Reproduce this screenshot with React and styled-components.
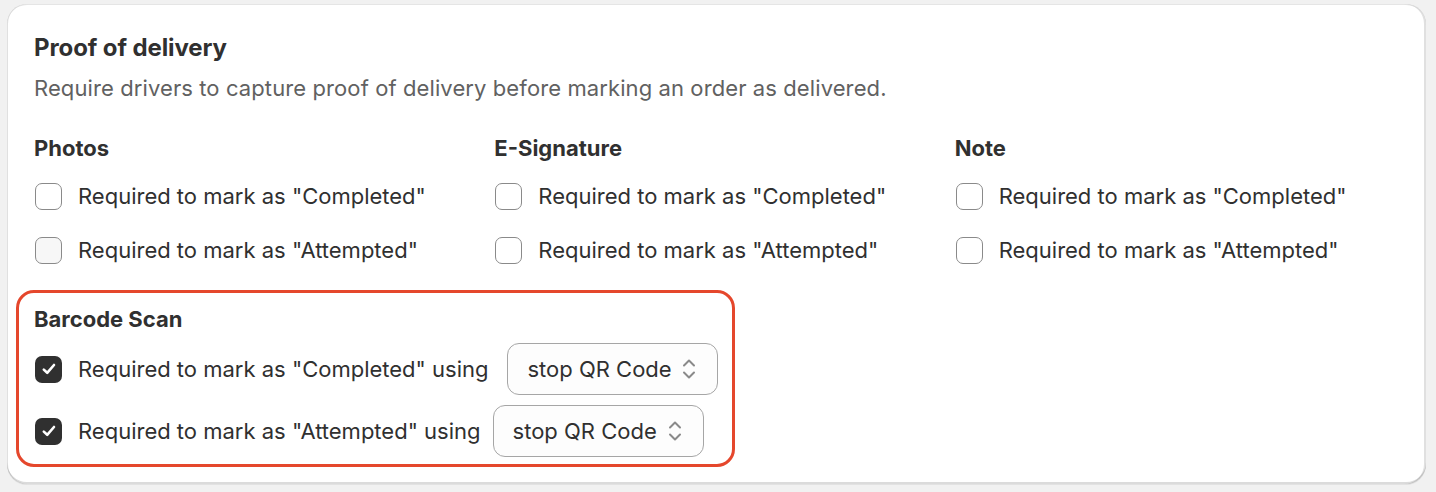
import React from "react";
import styled, { createGlobalStyle } from "styled-components";

const Global = createGlobalStyle`
  html, body { margin: 0; padding: 0; background: #f1f1f1; }
  body { font-family: Inter, "Noto Sans", sans-serif; color: #303030; }
  * { box-sizing: border-box; }
`;

const Page = styled.div`
  padding: 4px 10px 8px 7px;
`;

const Card = styled.section`
  background: #fff;
  border-radius: 20px;
  padding: 30px 27px 17px 27px;
  box-shadow: 0 1px 0 0 rgba(26, 26, 26, 0.07),
    inset 0 1px 0 0 rgba(204, 204, 204, 0.5),
    inset 0 -2px 0 0 rgba(0, 0, 0, 0.14),
    inset 1px 0 0 0 rgba(0, 0, 0, 0.12),
    inset -2px 0 0 0 rgba(0, 0, 0, 0.12);
`;

const Title = styled.h2`
  margin: 0;
  font-size: 24px;
  line-height: 28px;
  font-weight: 650;
  letter-spacing: -0.1px;
`;

const Subtitle = styled.p`
  margin: 12px 0 0;
  font-size: 22px;
  line-height: 28px;
  letter-spacing: 0.1px;
  color: #616161;
`;

const Columns = styled.div`
  display: grid;
  grid-template-columns: repeat(3, 1fr);
  column-gap: 16px;
  margin-top: 32px;
`;

const Group = styled.div`
  display: flex;
  flex-direction: column;
  gap: ${(p) => p.$gap}px;
`;

const GroupTitle = styled.h3`
  margin: 0 0 ${(p) => p.$after}px;
  font-size: 22px;
  line-height: 28px;
  font-weight: 650;
`;

const Row = styled.label`
  display: flex;
  align-items: center;
  min-height: 28px;
  font-size: 22px;
  line-height: 28px;
`;

const Box = styled.span`
  flex: none;
  width: 27px;
  height: 27px;
  border-radius: 7px;
  margin-left: 1px;
  margin-right: 16px;
  display: flex;
  align-items: center;
  justify-content: center;
  border: ${(p) => (p.$checked ? "none" : "1.5px solid #8a8a8a")};
  background: ${(p) => (p.$checked ? "#303030" : p.$tint ? "#f7f7f7" : "#fff")};
`;

const Highlight = styled.div`
  display: inline-block;
  margin: 26px 0 0 -18px;
  padding: 12px 14px 7px 15px;
  border: 3px solid #e5472c;
  border-radius: 18px;
`;

const LabelText = styled.span`
  margin-right: ${(p) => p.$space}px;
  white-space: nowrap;
`;

const Select = styled.div`
  flex: none;
  width: 211px;
  height: 52px;
  border: 1px solid #a6a6a6;
  border-radius: 12px;
  background: #fdfdfd;
  display: flex;
  align-items: center;
  justify-content: space-between;
  padding: 0 20px 0 19px;
  font-size: 22px;
  color: #303030;
`;

const Check = () => (
  <svg width="18" height="18" viewBox="0 0 18 18" fill="none">
    <path d="M3.8 9.6 L7.2 12.8 L14 5" stroke="#fff" strokeWidth="2.6" strokeLinecap="round" strokeLinejoin="round" />
  </svg>
);

const Chevrons = () => (
  <svg width="16" height="26" viewBox="0 0 16 26" fill="none">
    <path d="M3 9.5 L8 4.5 L13 9.5" stroke="#8a8a8a" strokeWidth="2" strokeLinecap="round" strokeLinejoin="round" />
    <path d="M3 16.5 L8 21.5 L13 16.5" stroke="#8a8a8a" strokeWidth="2" strokeLinecap="round" strokeLinejoin="round" />
  </svg>
);

const CheckRow = ({ label, checked, tint }) => (
  <Row>
    <Box $checked={checked} $tint={tint}>{checked && <Check />}</Box>
    {label}
  </Row>
);

const groups = ["Photos", "E-Signature", "Note"];

export default function App() {
  return (
    <>
      <Global />
      <Page>
        <Card>
          <Title>Proof of delivery</Title>
          <Subtitle>Require drivers to capture proof of delivery before marking an order as delivered.</Subtitle>
          <Columns>
            {groups.map((g, i) => (
              <Group key={g} $gap={26}>
                <GroupTitle $after={-6}>{g}</GroupTitle>
                <CheckRow label={'Required to mark as "Completed"'} />
                <CheckRow label={'Required to mark as "Attempted"'} tint={i === 0} />
              </Group>
            ))}
          </Columns>
          <Highlight>
            <Group $gap={10}>
              <GroupTitle $after={0}>Barcode Scan</GroupTitle>
              <Row>
                <Box $checked><Check /></Box>
                <LabelText $space={19}>Required to mark as "Completed" using</LabelText>
                <Select>stop QR Code<Chevrons /></Select>
              </Row>
              <Row>
                <Box $checked><Check /></Box>
                <LabelText $space={12}>Required to mark as "Attempted" using</LabelText>
                <Select>stop QR Code<Chevrons /></Select>
              </Row>
            </Group>
          </Highlight>
        </Card>
      </Page>
    </>
  );
}
